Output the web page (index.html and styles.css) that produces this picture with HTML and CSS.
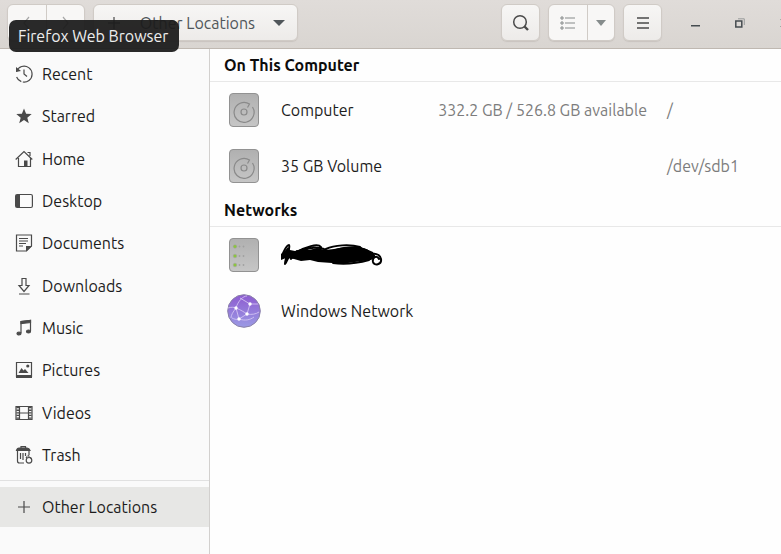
FILE: index.html
```html
<!DOCTYPE html>
<html lang="en">
<head>
<meta charset="utf-8">
<meta name="viewport" content="width=device-width, initial-scale=1">
<title>Other Locations</title>
<link rel="stylesheet" href="styles.css">
</head>
<body>
<div class="window">
  <header class="headerbar">
    <div class="group nav-group">
      <button class="seg" aria-label="Back"><svg width="16" height="16" viewBox="0 0 16 16" class="line pale"><path d="M10 2 5 8l5 6"/></svg></button>
      <button class="seg" aria-label="Forward"><svg width="16" height="16" viewBox="0 0 16 16" class="line pale"><path d="m6 2 5 6-5 6"/></svg></button>
    </div>
    <button class="group raised path-button">
      <svg width="16" height="16" viewBox="0 0 16 16" class="line"><path d="M8 2v12M2 8h12"/></svg>
      <span class="path-label">Other Locations</span>
      <svg width="12" height="6" viewBox="0 0 12 6"><path d="M0 0h12L6 6z" fill="#50565a"/></svg>
    </button>
    <div class="spacer"></div>
    <div class="tools">
      <button class="group raised tool" aria-label="Search"><svg width="18" height="18" viewBox="0 0 18 18" class="line"><circle cx="8" cy="8" r="6.300" stroke-width="1.500"/><path d="m12.500 12.500 3.500 3.500" stroke-width="2.400"/></svg></button>
      <div class="group view-group">
        <button class="seg" aria-label="List view"><svg width="16" height="14" viewBox="0 0 16 14" fill="none" stroke="#868a8a"><path d="M1 1h2v2H1zM1 6h2v2H1zM1 11h2v2H1z"/><path d="M5 2h10M5 7h10M5 12h10"/></svg></button>
        <button class="seg slim" aria-label="View options"><svg width="10" height="6" viewBox="0 0 10 6"><path d="M0 0h10L5 6z" fill="#868c8c"/></svg></button>
      </div>
      <button class="group raised tool" aria-label="Menu"><svg width="12" height="12" viewBox="0 0 12 12" class="line"><path d="M0 1h12M0 6h12M0 11h12" stroke-width="1.400"/></svg></button>
    </div>
    <div class="window-controls">
      <button aria-label="Minimize"><svg width="10" height="10" viewBox="0 0 10 10"><path d="M1 7h9v1.500H1z" fill="#454c50"/></svg></button>
      <button aria-label="Restore"><svg width="10" height="10" viewBox="0 0 10 10" fill="none"><path d="M3 .8h6.300V7" stroke="#999c9c"/><path d="M.8 3h6v6h-6z" stroke="#454c50" stroke-width="1.500"/></svg></button>
      <button aria-label="Close"><svg width="10" height="10" viewBox="0 0 10 10" class="line thick"><path d="m1 1 8 8M9 1 1 9"/></svg></button>
    </div>
  </header>

  <div class="body">
    <nav class="sidebar" aria-label="Places">
      <ul class="places">
        <li><a href="#"><svg class="line" width="18" height="18" viewBox="0 0 18 18"><path d="M1.500 6.500A8 8 0 1 1 1.600 12" stroke-dasharray="36 1.500"/><path d="M9 4.500V9l3 2.500"/><path d="M1 2v5l5-1z" fill="#4a4a4a" stroke="none"/></svg>Recent</a></li>
        <li><a href="#"><svg width="18" height="18" viewBox="0 0 18 18"><path d="m9 1.500 2.100 5.300 5.600.3-4.400 3.600 1.500 5.500L9 13.100l-4.800 3.100 1.500-5.500-4.400-3.600 5.600-.3z" fill="#4a4a4a"/></svg>Starred</a></li>
        <li><a href="#"><svg class="line" width="18" height="18" viewBox="0 0 18 18"><path d="M.7 9.500 9 1.500l8.300 8M3.500 8v8.500h12V8M12.500 2.500H15V6"/><path d="M9 10.500h3.500v6H9z" fill="#4a4a4a" stroke="none"/></svg>Home</a></li>
        <li><a href="#"><svg class="line" width="18" height="18" viewBox="0 0 18 18"><rect x=".6" y="2.500" width="16.800" height="13" rx="1.500"/><path d="M1 3h4v12H1z" fill="#4a4a4a" stroke="none"/></svg>Desktop</a></li>
        <li><a href="#"><svg class="line" width="18" height="18" viewBox="0 0 18 18"><path d="M1.500 1h15v11l-5 5h-10z"/><path d="M4 4.500h9M4 7h9M4 9.500h7M4 12h4"/><path d="M11 12h6l-6 5.500z" fill="#4a4a4a" stroke="none"/></svg>Documents</a></li>
        <li><a href="#"><svg class="line" width="18" height="18" viewBox="0 0 18 18"><path d="M7 1.500h4v7h3l-5 6-5-6h3zM4 17h10.500"/></svg>Downloads</a></li>
        <li><a href="#"><svg class="line" width="18" height="18" viewBox="0 0 18 18"><path d="M6 14V2.500l9.500-1V12"/><path d="M6 2.500 15.500 1.500v2L6 4.500z" fill="#4a4a4a"/><ellipse cx="4" cy="14.500" rx="2" ry="1.500" fill="#4a4a4a"/><ellipse cx="13.500" cy="12.500" rx="2" ry="1.500" fill="#4a4a4a"/></svg>Music</a></li>
        <li><a href="#"><svg class="line" width="18" height="18" viewBox="0 0 18 18"><path d="M1.500 1.500h15v14h-15z"/><path d="M1 14h16v3H1zM3.500 12l3-5 2 2.500 1.500-1.500 3.500 4z" fill="#4a4a4a" stroke="none"/><circle cx="12.800" cy="5" r="1.600" fill="#4a4a4a" stroke="none"/></svg>Pictures</a></li>
        <li><a href="#"><svg class="line" width="18" height="18" viewBox="0 0 18 18"><path d="M1 2.500h16v13H1zM4.500 2.500v13M13.500 2.500v13M4.500 9h9"/><path d="M2.700 3v12M15.300 3v12" stroke-width="2.600" stroke-dasharray="1.300 1.300"/></svg>Videos</a></li>
        <li><a href="#"><svg class="line" width="18" height="18" viewBox="0 0 18 18"><path d="M1.500 4.500C2 2.500 3 2 4 2h8c1.500 0 2.500 1 3 2.500z" fill="#4a4a4a"/><path d="M6 2V.7h4.500V2M2.500 5v10c0 1.500.5 2 2 2H9M14 5v4M5.500 7v6M8 7v7M10.500 7v3"/><circle cx="14" cy="14.300" r="2.800"/><path d="m11 12 2-2.500 2 1.500 1.500 2" stroke-dasharray="2 1"/></svg>Trash</a></li>
      </ul>
      <a href="#" class="other" aria-current="page"><svg class="line" width="18" height="18" viewBox="0 0 18 18"><path d="M9 3v12M3 9h12"/></svg>Other Locations</a>
    </nav>

    <main class="content">
      <section>
        <h2>On This Computer</h2>
        <ul class="locations">
          <li>
            <svg class="device" width="34" height="36" viewBox="0 0 34 36"><use href="#drive"/></svg>
            <span class="name">Computer</span><span class="space">332.2 GB / 526.8 GB available</span><span class="mount">/</span>
          </li>
          <li>
            <svg class="device" width="34" height="36" viewBox="0 0 34 36"><use href="#drive"/></svg>
            <span class="name">35 GB Volume</span><span class="mount">/dev/sdb1</span>
          </li>
        </ul>
      </section>
      <section>
        <h2>Networks</h2>
        <ul class="locations">
          <li>
            <svg class="device" width="34" height="36" viewBox="0 0 34 36">
              <rect x="2.500" y="1.500" width="29" height="33" rx="3.500" fill="url(#metal)" stroke="#929292"/>
              <g fill="#8cc63c" stroke="#a3a3a3" stroke-width=".6"><circle cx="8" cy="9.500" r="1.800"/><circle cx="8" cy="19" r="1.800"/><circle cx="8" cy="28" r="1.800"/></g>
              <g fill="#a0a0a0"><circle cx="12.500" cy="9.500" r=".9"/><circle cx="16.500" cy="9.500" r=".9"/><circle cx="12.500" cy="19" r=".9"/><circle cx="16.500" cy="19" r=".9"/><circle cx="12.500" cy="28" r=".9"/><circle cx="16.500" cy="28" r=".9"/></g>
            </svg>
            <svg class="name scribble" width="102" height="22" viewBox="0 0 102 22" role="img" aria-label="Hidden name">
              <path d="M2 9l5-6 2 3 5 1 6-2 8 1 8-2 8 2 9-1 10-2 14-1 8 3 7 3 3 5-5 3-9 1-14 2-16 0-14-1-8-2-9 1-7-2-8-1-5 2-4 5-3-7z" fill="#000"/>
              <path d="M1 11C3 8 5 1 8 1c2 4-4 12-4 19C6 17 8 12 10 8l0 7 6-8 2 8 5-8M16 8C24 3 37-1 40 3c-1 4-8 5-13 8M22 7c6-4 15-4 21-2 4 3 2 6-2 7M45 5c8-4 24-5 34-2 4 3-1 5-6 6M50 8c8-4 18-5 30-3M52 19c14 2 25 0 36-3M76 5c8-1 16 3 11 7 6-4 12-2 13 3 1 6-7 7-8 3-1-5 4-7 6-3" fill="none" stroke="#000" stroke-width="2" stroke-linejoin="round" stroke-linecap="round"/>
            </svg>
          </li>
          <li>
            <svg class="device" width="34" height="36" viewBox="0 0 34 36">
              <circle cx="17" cy="18" r="16.300" fill="url(#globe)" stroke="#8980a8"/>
              <g fill="none" stroke="#d9cbf5" stroke-width="1" opacity=".8"><path d="M1 15c3-1 6-1 8 0 5 2 8 4 11 6M9 15C11 8 16 3 20 3M9 15l3 11M12 26l8-5 3-10M23 11 13 5M23 11h8M20 21c5 1 9 0 12-2M12 26c6 2 11 1 15-2M9 15C6 19 4 22 4 25M12 26c-3 1-5 0-7-1"/></g>
              <g fill="#fff"><circle cx="9" cy="15" r="1.700"/><circle cx="23" cy="11" r="1.700"/><circle cx="20" cy="21" r="1.700"/><circle cx="12" cy="26" r="1.700"/></g>
            </svg>
            <span class="name">Windows Network</span>
          </li>
        </ul>
      </section>
    </main>
  </div>
  <div class="tooltip" role="tooltip">Firefox Web Browser</div>
</div>

<svg class="defs" width="0" height="0" aria-hidden="true">
  <defs>
    <linearGradient id="metal" x2="0" y2="1"><stop stop-color="#b0b0b0"/><stop offset="1" stop-color="#c6c6c6"/></linearGradient>
    <linearGradient id="globe" x2="0" y2="1"><stop stop-color="#8d5bd0"/><stop offset="1" stop-color="#9b9ae4"/></linearGradient>
    <g id="drive">
      <rect x="2.500" y="1.500" width="29" height="33" rx="3.500" fill="url(#metal)" stroke="#929292"/>
      <path d="M25.500 15A10 10 0 1 1 22.500 12L20.500 15.500" fill="none" stroke="#8a8a8a" stroke-width="1.200"/>
      <circle cx="17" cy="20" r="3" fill="none" stroke="#8a8a8a" stroke-width="1.200"/>
    </g>
  </defs>
</svg>
</body>
</html>
```
FILE: styles.css
```css
* {
  box-sizing: border-box;
}

body {
  margin: 0;
  font: 16px/24px Ubuntu, "Noto Sans", sans-serif;
  color: #1c1c1c;
  background: #fefefe;
}

ul {
  list-style: none;
  margin: 0;
  padding: 0;
}

a {
  color: inherit;
  text-decoration: none;
}

button {
  display: flex;
  align-items: center;
  justify-content: center;
  padding: 0;
  border: 0;
  background: none;
  font: inherit;
  color: #50565a;
}

svg {
  flex: none;
}

.line {
  fill: none;
  stroke: #4a4a4a;
  stroke-width: 1.2;
}

.thick {
  stroke-width: 1.7;
}

.pale {
  stroke: #a8a8a8;
}

.defs {
  position: absolute;
}

.window {
  position: relative;
  display: flex;
  flex-direction: column;
  min-height: 100vh;
  overflow: hidden;
}

.headerbar {
  display: flex;
  height: 49px;
  padding: 4px 0 7px 7px;
  background: linear-gradient(#e0dcd9, #d9d5d1);
  border-bottom: 1px solid #bfb8b1;
}

.group {
  display: flex;
  border: 1px solid #d0cbc6;
  border-radius: 6px;
  background: #f8f7f6;
  box-shadow: 0 1px 1px #c9c4bf;
}

.raised {
  background: linear-gradient(#f7f6f5, #edebe9);
}

.nav-group {
  width: 78px;
  margin-right: 8px;
}

.seg {
  flex: 1;
}

.seg + .seg {
  border-left: 1px solid #d0cbc6;
}

.path-button {
  width: 205px;
  gap: 18px;
  padding-right: 12px;
  justify-content: flex-end;
}

.spacer {
  flex: 1;
}

.tools {
  display: flex;
  gap: 8px;
  margin-right: 10px;
}

.tool {
  width: 39px;
}

.view-group {
  width: 67px;
}

.slim {
  flex: 0 0 27px;
}

.window-controls {
  display: flex;
  margin-right: -26px;
}

.window-controls button {
  width: 45px;
}

.body {
  flex: 1;
  display: flex;
}

.sidebar {
  flex: 0 0 210px;
  padding-top: 4px;
  border-right: 1px solid #d2d0ce;
  background: #fafafa;
}

.places {
  display: grid;
  grid-auto-rows: 1fr;
  height: 428px;
  padding-bottom: 4px;
  border-bottom: 1px solid #e1e1e1;
}

.sidebar a {
  display: flex;
  align-items: center;
  gap: 9px;
  height: 100%;
  padding-left: 15px;
}

.sidebar .other {
  height: 40px;
  margin-top: 6px;
  background: #e7e7e5;
}

.content {
  flex: 1;
  min-width: 0;
}

h2 {
  margin: 0;
  padding: 4px 14px;
  border-bottom: 1px solid #e8e8e8;
  color: #0c0c0c;
  font-size: 16px;
  line-height: 24px;
}

.locations li {
  display: flex;
  align-items: center;
  height: 56px;
  padding-left: 17px;
}

.device {
  margin-right: 20px;
}

.space,
.mount {
  color: #7c7c7c;
}

.space {
  margin-left: auto;
}

.mount {
  width: 114px;
  margin-left: 20px;
}

.name + .mount {
  margin-left: auto;
}

.tooltip {
  position: absolute;
  top: 20px;
  left: 9px;
  padding: 4px 11px 4px 9px;
  border-radius: 7px;
  background: rgba(28, 28, 28, 0.94);
  color: #eee;
}
```
